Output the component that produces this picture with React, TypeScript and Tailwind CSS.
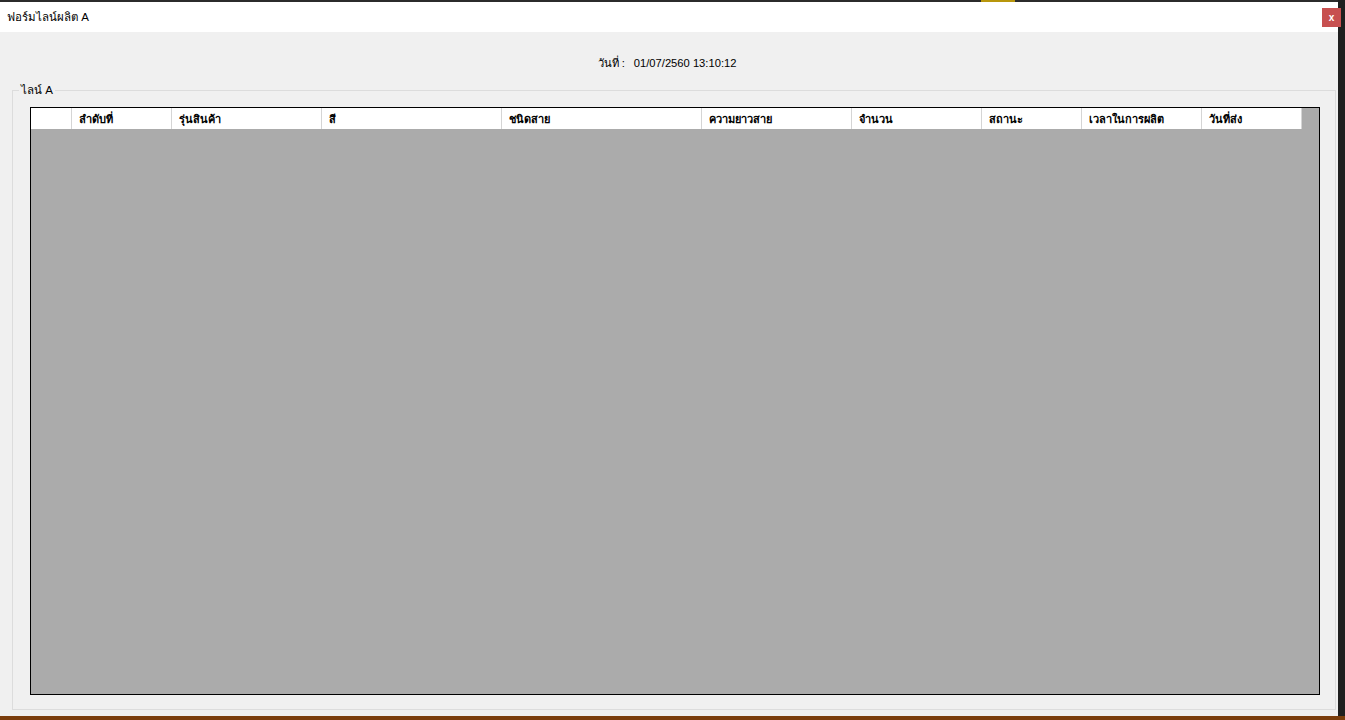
const columns = [
  { label: '', width: 41 },
  { label: 'ลำดับที่', width: 100 },
  { label: 'รุ่นสินค้า', width: 150 },
  { label: 'สี', width: 180 },
  { label: 'ชนิดสาย', width: 200 },
  { label: 'ความยาวสาย', width: 150 },
  { label: 'จำนวน', width: 130 },
  { label: 'สถานะ', width: 100 },
  { label: 'เวลาในการผลิต', width: 120 },
  { label: 'วันที่ส่ง', width: 100 },
]

export default function App() {
  return (
    <div
      className="w-[1345px] h-[720px] overflow-hidden bg-[#1f1f1f] flex flex-col text-[11.2px] text-black"
      style={{ fontFamily: '"Liberation Sans", "Noto Sans", Tahoma, sans-serif' }}
    >
      <div className="flex h-[716px]">
        <div className="w-[1338px] flex flex-col">
          {/* top edge */}
          <div className="h-[2px] bg-[#2b2b2b] flex">
            <div className="ml-[981px] w-[34px] bg-[#b8960c]" />
          </div>
          {/* title bar */}
          <div className="h-[30px] bg-white flex items-center pl-[7px] pt-[1px]">
            <span className="text-[11.5px] flex-1">ฟอร์มไลน์ผลิต A</span>
            <button className="w-[19px] h-[19px] bg-[#c75050] text-white text-[10px] font-bold flex items-center justify-center leading-none -mr-[3px]">
              x
            </button>
          </div>
          {/* body */}
          <div className="flex-1 bg-[#f0f0f0] flex flex-col">
            <div className="h-[58px] flex items-center justify-center gap-[9px] pt-[4px] pr-[4px]">
              <span>วันที่ :</span>
              <span>01/07/2560 13:10:12</span>
            </div>
            {/* group box */}
            <div className="relative ml-[12px] w-[1324px] h-[620px] border border-[#dcdcdc]">
              <span className="absolute left-[6px] -top-[8px] px-[2px] bg-[#f0f0f0] text-[11.5px] leading-[14px]">
                ไลน์ A
              </span>
              <div className="ml-[17px] mt-[16px] w-[1290px] h-[588px] border border-black bg-[#ababab]">
                <div className="flex h-[21px] bg-white w-fit">
                  {columns.map((c, i) => (
                    <div
                      key={i}
                      className="h-full border-r border-[#d5d5d5] pl-[7px] pt-[1px] flex items-center text-[11px] font-semibold whitespace-nowrap"
                      style={{ width: c.width }}
                    >
                      {c.label}
                    </div>
                  ))}
                </div>
              </div>
            </div>
          </div>
        </div>
      </div>
      <div className="flex-1 bg-[#7a3d0c]" />
    </div>
  )
}
